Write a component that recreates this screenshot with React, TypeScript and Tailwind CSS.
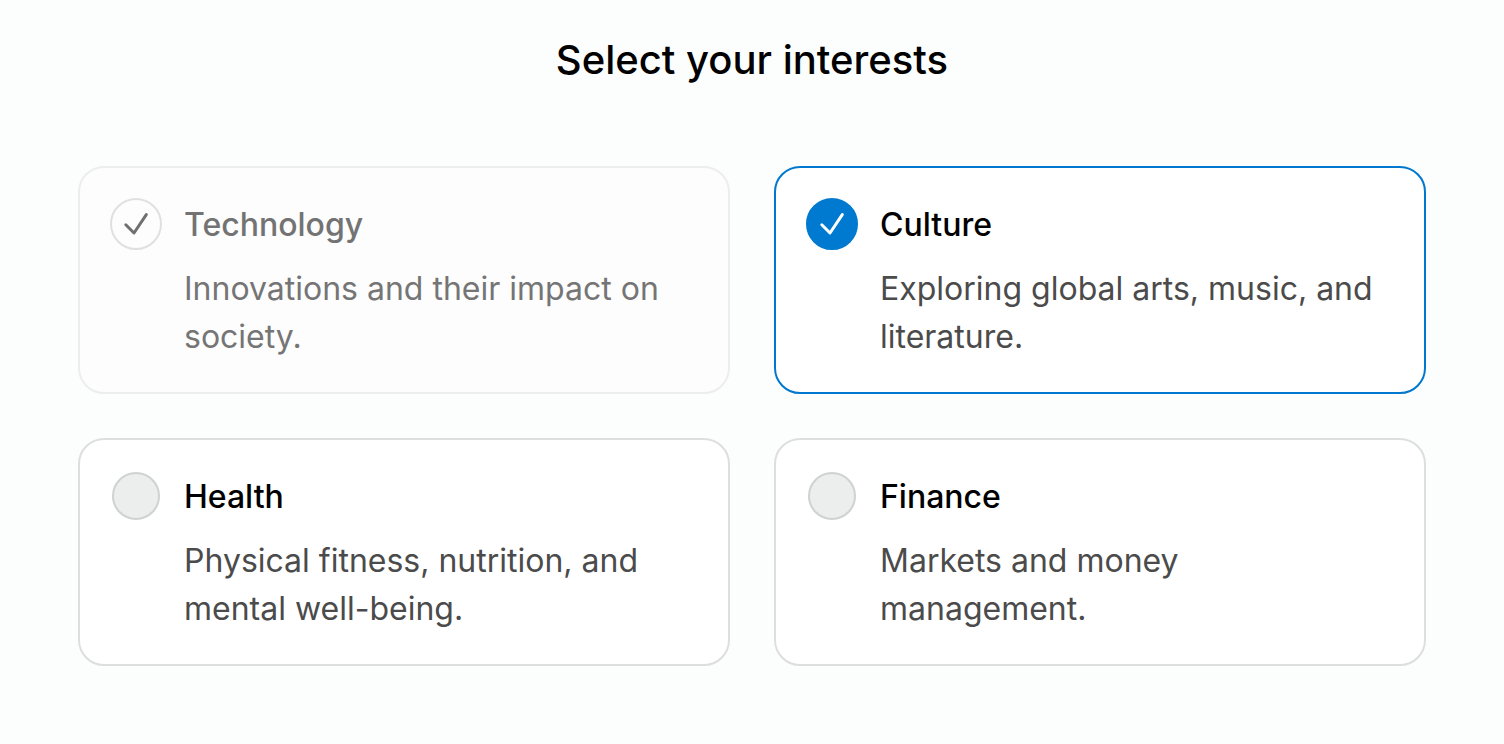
import { useState } from "react";

type Interest = {
  id: string;
  title: string;
  description: string;
  checked?: boolean;
  disabled?: boolean;
};

const interests: Interest[] = [
  { id: "technology", title: "Technology", description: "Innovations and their impact on society.", checked: true, disabled: true },
  { id: "culture", title: "Culture", description: "Exploring global arts, music, and literature.", checked: true },
  { id: "health", title: "Health", description: "Physical fitness, nutrition, and mental well-being." },
  { id: "finance", title: "Finance", description: "Markets and money management." },
];

function CheckCard({ item }: { item: Interest }) {
  const [checked, setChecked] = useState(Boolean(item.checked));
  const disabled = Boolean(item.disabled);

  const card = disabled
    ? "border-[#eceeed] bg-[#fdfdfe]"
    : checked
      ? "border-[#0078cf] bg-white"
      : "border-[#dcdfde] bg-white";
  const circle = disabled
    ? "size-[52px] border-[#dfe1e0] bg-[#fdfdfe]"
    : checked
      ? "size-[52px] border-[#0079d0] bg-[#0079d0]"
      : "size-12 border-[#cfd2d1] bg-[#eceeed]";

  return (
    <label className={`flex gap-[22px] rounded-[26px] border-2 pt-[30px] pr-10 pb-[31px] pl-[30px] ${card}`}>
      <span className="grid size-[52px] shrink-0 place-items-center">
        <input
          type="checkbox"
          className={`col-start-1 row-start-1 appearance-none rounded-full border-2 ${circle}`}
          checked={checked}
          disabled={disabled}
          aria-label={item.title}
          aria-describedby={`${item.id}-description`}
          onChange={(event) => setChecked(event.target.checked)}
        />
        {checked && (
          <svg
            viewBox="0 0 52 52"
            className={`pointer-events-none col-start-1 row-start-1 size-[52px] ${disabled ? "text-[#707070]" : "text-white"}`}
            fill="none"
            stroke="currentColor"
            strokeWidth="3"
            strokeLinecap="round"
            strokeLinejoin="round"
            aria-hidden="true"
          >
            <path d="M15.8 26.8 24 35 36.3 16.6" />
          </svg>
        )}
      </span>
      <span className="flex min-w-0 flex-col gap-[13px]">
        <span className={`text-[32px] leading-[54px] font-medium ${disabled ? "text-[#737373]" : "text-black"}`}>
          {item.title}
        </span>
        <span id={`${item.id}-description`} className={`text-[32px] leading-12 ${disabled ? "text-[#757575]" : "text-[#4b4b4b]"}`}>
          {item.description}
        </span>
      </span>
    </label>
  );
}

export default function App() {
  return (
    <main className="min-h-screen bg-[#fcfefd] px-[78px] pt-8 pb-[78px] font-['Inter',sans-serif]">
      <h1 className="text-center text-[40px] leading-14 font-medium text-black">Select your interests</h1>
      <div className="mt-[78px] grid grid-cols-2 gap-11">
        {interests.map((item) => (
          <CheckCard key={item.id} item={item} />
        ))}
      </div>
    </main>
  );
}
